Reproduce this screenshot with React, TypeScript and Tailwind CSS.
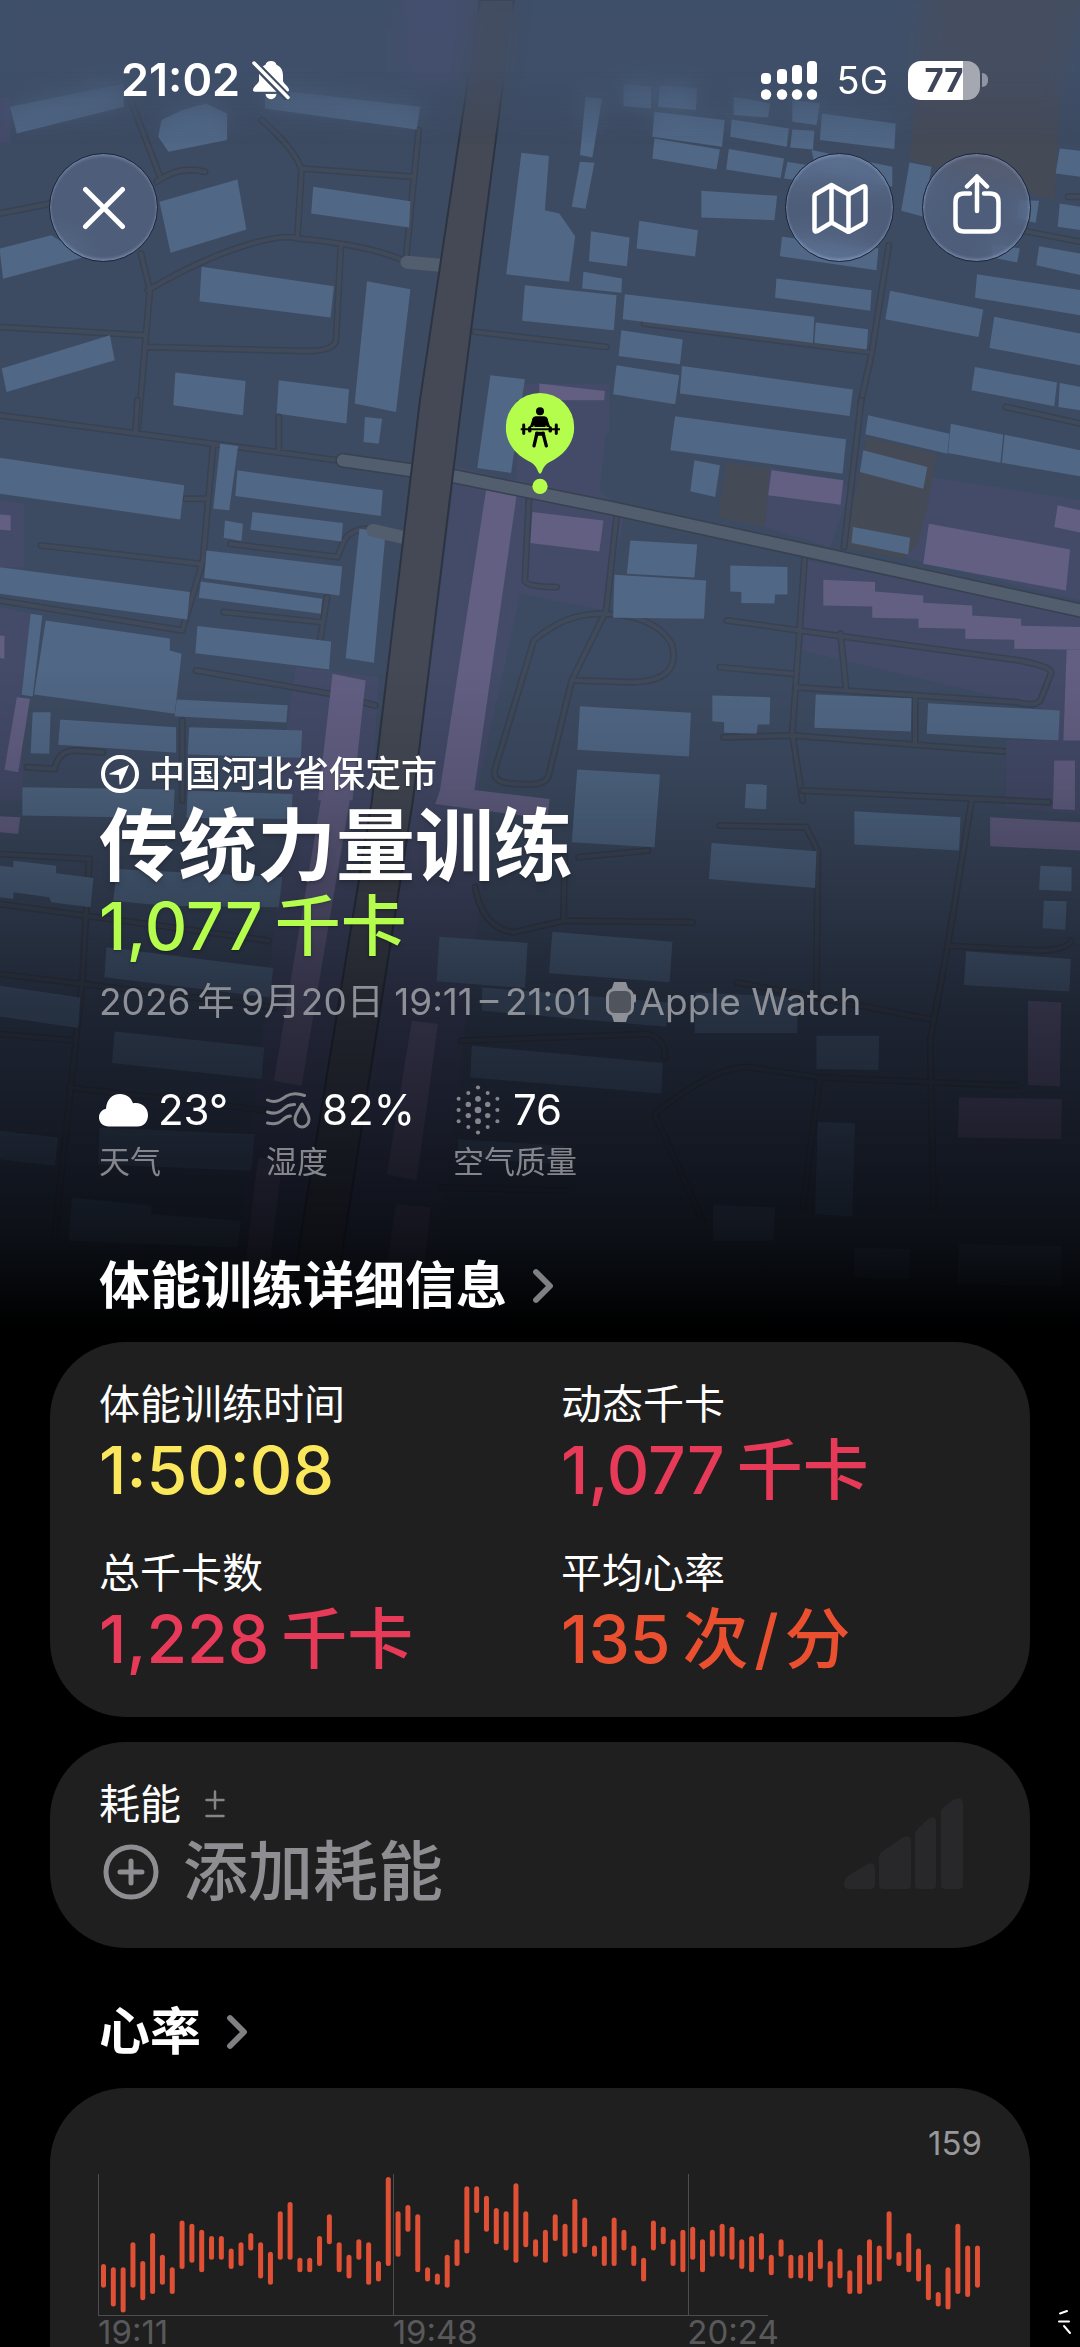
import type { ReactNode } from 'react';
import { ChevronRight } from 'lucide-react';

interface MapTileProps {
  y: number;
  land?: string[];
  paved?: string[];
  homes: string[];
  shops: string[];
  lanes: string;
}

interface MetricProps {
  label: string;
  value: string;
  unit?: string;
  className: string;
}

const SMALL = 'fill-none stroke-[#374254] stroke-[7px]';
const SMALL_INNER = 'fill-none stroke-[#404a5a] stroke-[4px]';

const TILES: MapTileProps[] = [
  {
    y: 0,
    land: ['585,0 690,0 670,240 585,240', '0,290 15,290 15,430 0,430', '750,1150 885,1150 885,1300 750,1300'],
    paved: ['1340,0 1568,0 1540,250 1530,600 1320,480'],
    homes: [
      '15,320 180,250 180,320 25,400', '235,360 265,330 300,310 330,340 330,420 245,455 230,410',
      '385,280 400,270 610,320 605,388 385,325', '232,605 345,538 358,688 248,758',
      '455,560 596,603 594,682 452,640', '0,745 75,705 125,770 5,836', '293,800 485,858 480,952 290,903',
      '533,843 596,867 575,1235 515,1210', '3,1105 160,1005 167,1080 10,1175',
      '255,1117 357,1142 353,1245 252,1215', '405,1140 507,1167 503,1270 402,1240',
      '757,458 797,468 791,630 812,640 835,708 826,845 735,822', '850,290 874,296 860,472 842,465',
      '842,485 863,488 850,626 830,620', '905,250 945,260 945,325 905,318', '958,255 1012,265 1010,330 955,320',
      '950,335 1052,360 1048,440 947,410', '950,415 1045,448 1040,508 947,475',
      '1065,290 1118,310 1115,352 1065,345', '1062,358 1145,385 1142,440 1060,410',
      '1150,388 1182,392 1180,448 1147,442', '1150,300 1190,310 1185,375 1150,365',
      '1193,340 1300,370 1298,447 1190,420', '1058,447 1138,475 1133,534 1054,508',
      '1143,485 1185,500 1175,545 1138,535', '1178,450 1295,500 1295,560 1185,520',
      '1018,572 1128,587 1124,660 1018,652', '1320,487 1352,500 1340,650 1308,632',
      '1538,445 1568,452 1568,530 1532,520', '1538,610 1568,620 1568,690 1535,680',
      '1480,600 1508,602 1503,668 1475,655', '928,662 1013,690 1009,769 924,745',
      '858,693 914,712 910,798 855,783', '847,815 903,835 902,878 845,865', '762,855 895,885 891,990 758,962',
      '907,882 1182,950 1180,1028 904,957', '1184,967 1260,987 1258,1048 1182,1028',
      '1135,710 1275,745 1272,810 1132,768', '1127,835 1265,870 1263,932 1125,893',
      '1292,872 1427,928 1420,1010 1285,957', '1440,730 1480,745 1476,787 1440,772',
      '1508,738 1568,760 1568,825 1504,795', '1418,822 1568,870 1568,945 1415,893',
      '1443,950 1568,1000 1568,1095 1436,1043', '902,990 991,1018 987,1092 898,1067',
      '895,1095 986,1125 980,1212 890,1182', '990,1097 1238,1168 1233,1247 987,1180',
      '1415,1100 1534,1147 1530,1218 1410,1170', '1538,1148 1568,1160 1568,1230 1536,1220',
      '712,1125 762,1137 742,1418 693,1403',
    ],
    shops: ['783,1150 878,1172 875,1262 783,1230'],
    lanes:
      'M190 300L232 525M228 545Q260 495 298 515M380 360Q430 450 438 510L432 712M438 505L600 530M608 390L590 765M0 640L75 610M215 870Q290 780 350 740T432 715Q540 735 590 785M205 760L218 870L200 1300M495 740L488 1020Q485 1055 440 1052L215 1040M0 980L210 1005M690 995L880 1040M935 970L1260 1055M1290 735L1265 1060L1250 1200M1480 690L1568 725M1550 590H1568',
  },
  {
    y: 400,
    land: [
      '750,0 885,0 870,270 905,330 905,350 880,630 755,580 690,1200 600,1200 662,200 750,240',
      '1115,200 1235,260 1205,440 1110,380', '1350,230 1568,300 1568,600 1310,470',
      '1170,480 1568,640 1568,1200 1460,1200 1480,1060 1540,940 1500,915 1165,750',
      '0,300 35,310 35,500 0,500', '0,620 45,640 30,900 35,1200 0,1200', '430,800 550,830 540,1200 400,1200',
    ],
    paved: ['1055,185 1118,205 1110,380 1042,350', '1258,110 1360,160 1345,330 1330,440 1310,475 1225,440'],
    homes: [
      '0,172 268,255 262,357 0,280', '320,130 346,137 333,330 310,325', '345,210 556,270 553,347 342,287',
      '530,50 555,55 550,130 528,125', '367,335 498,368 496,423 364,388', '327,360 353,370 351,422 325,412',
      '300,450 497,498 493,585 297,533', '292,543 468,595 466,640 289,592', '0,500 276,575 272,657 0,580',
      '522,385 560,395 543,787 502,773', '287,677 481,723 478,807 284,758', '45,640 62,645 48,888 32,883',
      '67,660 247,714 247,750 264,760 254,940 50,882', '257,897 418,914 416,966 254,947',
      '48,935 74,935 72,1060 45,1058', '88,957 256,980 256,1057 85,1033', '275,980 439,990 437,1072 273,1062',
      '980,48 1228,117 1223,220 973,150', '1008,180 1045,195 1038,290 1002,273',
      '1260,45 1378,100 1375,160 1256,102', '1380,70 1456,103 1452,187 1376,158',
      '1458,103 1568,150 1568,228 1454,187', '1253,150 1346,200 1340,265 1248,215',
      '1238,380 1321,412 1318,462 1236,428', '915,420 1012,432 1008,531 910,520',
      '892,523 1025,540 1022,655 890,652',
      '1060,495 1143,500 1143,582 1125,582 1124,609 1076,608 1076,575 1060,573',
      '1034,885 1118,890 1117,972 1100,972 1098,1000 1051,997 1051,965 1034,962',
      '842,917 1003,937 1000,1068 838,1048', '1184,882 1323,893 1322,993 1182,982',
      '1347,908 1538,930 1536,1020 1345,1000',
    ],
    shops: [
      '1120,210 1224,240 1220,313 1115,285', '1348,370 1553,447 1547,570 1340,490',
      '1535,315 1568,330 1568,397 1530,380', '706,265 750,285 688,1180 638,1180', '773,335 876,360 870,453 770,428',
      '1195,538 1270,545 1270,573 1340,585 1340,607 1411,615 1411,645 1482,655 1482,676 1568,680 1568,748 1472,745 1472,718 1401,715 1401,685 1333,682 1333,655 1266,652 1266,618 1195,615',
      '0,342 16,345 16,390 0,388', '0,705 7,707 7,775 0,772', '483,820 531,840 512,1200 462,1200',
      '25,890 44,895 27,1115 7,1108', '1548,748 1568,748 1568,1040 1543,1035',
    ],
    lanes:
      'M0 45L310 130L490 180M200 0L197 100M405 50V150M310 130L295 480L265 690M270 295H300M60 435L290 490M0 600L265 690M335 430L490 470L500 420Q510 385 535 385M325 635L465 665M475 590L465 720M285 810L480 880L545 915M768 290L762 540Q765 560 808 560M895 350L880 630L830 840L797 1120Q795 1160 750 1150Q715 1150 718 1110L775 720Q820 640 870 640Q950 640 975 730Q990 840 920 845L835 840M1168 470L1150 1000L1165 1200M1055 660L1160 690L1480 780Q1530 800 1525 820L1510 900Q1500 920 1475 905L1155 860M1220 700L1228 865M1045 800L1150 820M1050 1010L1150 1005L1568 1070M1328 895V1030M1250 0L1225 440M1460 20L1568 70M40 1100L80 1105Q85 1050 110 1050L150 1055M265 960V1200',
  },
  {
    y: 740,
    land: ['420,180 540,180 420,1800 330,1800', '600,180 715,180 620,1800 480,1800', '1460,0 1568,0 1568,220 1460,200'],
    homes: [
      '33,140 254,147 252,233 33,225', '273,150 425,160 423,235 271,232',
      '0,375 20,380 20,360 82,375 82,398 136,412 132,500 75,485 72,470 20,455 20,475 0,470',
      '170,385 410,410 405,500 240,495 165,480', '155,620 397,682 392,770 152,710', '0,735 117,770 114,862 0,827',
      '167,872 384,920 380,1015 163,967', '638,588 766,607 762,742 634,722', '802,573 976,603 972,725 797,698',
      '700,740 970,785 967,858 700,810', '685,915 962,967 960,1058 683,1010', '1010,755 1158,770 1157,877 1008,877',
      '1185,885 1276,885 1275,988 1185,985', '1240,212 1394,230 1392,330 1240,312',
      '1033,307 1185,332 1183,442 1029,415', '1510,375 1555,380 1555,452 1508,447',
      '1515,480 1548,482 1546,567 1513,563', '1402,632 1554,655 1552,752 1399,733',
      '1187,1143 1241,1147 1237,1427 1183,1420', '145,1160 370,1180 365,1290 143,1270',
      '0,1170 85,1190 80,1275 0,1255', '105,1370 220,1395 220,1420 350,1440 345,1520 100,1500',
      '665,1195 820,1215 815,1270 665,1250', '1035,1393 1125,1400 1122,1500 1035,1500',
      '838,87 958,102 950,320 830,305', '1083,130 1113,132 1112,206 1081,202',
      '1240,1520 1320,1525 1320,1615 1240,1610', '1392,1510 1540,1515 1540,1635 1390,1630',
    ],
    shops: [
      '470,130 512,130 438,1035 398,1020', '642,130 690,130 688,148 798,175 795,235 632,190',
      '598,840 636,850 605,1320 562,1300', '375,1250 410,1260 390,1600 355,1600',
      '575,1390 625,1400 615,1600 560,1600', '0,227 30,230 27,280 0,275', '1437,230 1568,245 1568,330 1437,317',
      '1530,60 1560,60 1560,208 1528,205', '1492,780 1540,785 1538,1037 1492,1033',
      '1392,1070 1541,1075 1540,1195 1390,1190',
    ],
    lanes:
      'M0 340L130 355L120 720L80 1480M0 490L390 600M0 700L400 800M0 880L110 900M100 1040L390 1110M1165 150L1522 185M1410 180L1375 620L1350 900L1355 1400M1045 255L1170 260L1187 330L1185 760M1375 615L1510 630Q1550 625 1555 600M690 440Q700 560 745 575L820 540L1005 545M820 340L818 540M840 350L940 330M670 900L940 880Q965 890 965 950M1070 725L1350 835M950 1120Q1040 970 1090 980L1190 1010L1475 1035M950 1120L1020 1440M1190 1010L1165 1400M640 1340L820 1350',
  },
];

// [high, low] beats per minute, one entry per bar
const HEART_RATE: [number, number][] = [
  [129, 123], [128, 117], [128, 115], [136, 123], [130, 119], [139, 121], [132, 124], [128, 121], [143, 129],
  [142, 131], [140, 128], [138, 132], [138, 132], [134, 129], [136, 130], [139, 135], [136, 126], [133, 124],
  [146, 132], [149, 132], [131, 128], [131, 128], [138, 130], [145, 137], [136, 128], [132, 126], [137, 132],
  [136, 124], [130, 125], [157, 130], [146, 133], [148, 141], [145, 128], [128, 125], [126, 124], [132, 123],
  [137, 130], [154, 134], [154, 147], [151, 141], [147, 137], [146, 135], [155, 131], [146, 136], [137, 133],
  [140, 131], [145, 138], [142, 133], [150, 134], [144, 136], [135, 133], [138, 130], [144, 130], [140, 135],
  [135, 130], [131, 125], [143, 135], [141, 137], [137, 130], [140, 128], [141, 132], [137, 128], [140, 133],
  [142, 133], [141, 132], [137, 129], [138, 128], [139, 132], [132, 127], [137, 133], [132, 126], [132, 126],
  [133, 125], [137, 129], [130, 123], [134, 126], [127, 121], [132, 121], [137, 124], [135, 125], [146, 132],
  [133, 130], [139, 128], [134, 125], [129, 119], [120, 117], [128, 116], [142, 121], [135, 120], [135, 123],
];

const AIR_DOTS: [number, number, number][] = [
  [0, 0, 3.3], [0, -11.2, 2.9], [0, 11.2, 2.9], [0, -22.5, 2.1], [0, 22.5, 2.1],
  [-9.7, -5.6, 2.7], [-9.7, 5.6, 2.7], [9.7, -5.6, 2.7], [9.7, 5.6, 2.7],
  [-9.7, -17, 2], [-9.7, 17, 2], [9.7, -17, 2], [9.7, 17, 2],
  [-19.4, -11.2, 2], [-19.4, 0, 2.1], [-19.4, 11.2, 2], [19.4, -11.2, 2], [19.4, 0, 2.1], [19.4, 11.2, 2],
];

const bpmToY = (bpm: number) => 5.5 + (157 - bpm) * 3.11;

const MapTile = ({ y, land = [], paved = [], homes, shops, lanes }: MapTileProps) => (
  <g transform={`translate(0 ${y}) scale(0.6888 0.3333)`}>
    {land.map((p) => <polygon key={p} points={p} className="fill-[#444b69]" />)}
    {paved.map((p) => <polygon key={p} points={p} className="fill-[#454a57]" />)}
    <path d={lanes} vectorEffect="non-scaling-stroke" strokeLinecap="round" className={SMALL} />
    <path d={lanes} vectorEffect="non-scaling-stroke" strokeLinecap="round" className={SMALL_INNER} />
    {homes.map((p) => <polygon key={p} points={p} className="fill-[#506785]" />)}
    {shops.map((p) => <polygon key={p} points={p} className="fill-[#625f83]" />)}
  </g>
);

const RouteMap = () => (
  <div className="absolute inset-0 -z-10 overflow-hidden bg-[#3d4b62]">
    <svg viewBox="0 0 1080 1341" preserveAspectRatio="xMidYMin slice" className="size-full" aria-hidden="true">
      {TILES.map((tile) => <MapTile key={tile.y} {...tile} />)}
      <path d="M407 262L440 265M373 530L403 537" strokeLinecap="round" className="fill-none stroke-[#525d6d] stroke-[13px]" />
      <path d="M343 460L412 470L455 476L608 507L1080 610" strokeLinejoin="round" strokeLinecap="round" className="fill-none stroke-[#37414f] stroke-[15px]" />
      <path d="M343 460L412 470L455 476L608 507L1080 610" strokeLinejoin="round" strokeLinecap="round" className="fill-none stroke-[#525d6d] stroke-[12px]" />
      <path d="M480 0H514L462 400L413 800L344 1240L330 1341H288L300 1240L372 800L420 400Z" className="fill-[#444955] stroke-[#2c3442] stroke-2" />
    </svg>
    <div className="absolute inset-x-0 top-0 h-36 bg-[#46597a]/30 backdrop-blur-md [mask-image:linear-gradient(black_50%,transparent)]" />
    <div className="absolute inset-0 bg-[linear-gradient(to_bottom,transparent_50%,rgb(0_0_0/0.1)_58%,rgb(3_4_8/0.32)_67%,rgb(5_6_12/0.55)_75%,rgb(5_6_12/0.7)_84%,rgb(4_5_9/0.84)_92%,black_99%)]" />
  </div>
);

const StatusBar = () => (
  <div className="flex h-15 items-center justify-between pr-23 pl-[121px]">
    <div className="flex items-center gap-3">
      <time className="text-[45px] leading-15 font-semibold">21:02</time>
      <svg viewBox="0 0 38 40" className="h-10 w-9.5 fill-white" aria-label="静音">
        <path d="M19 1c-3 0-5 1.500-5.500 3.800C8.500 7 7 11 7 16v4.500c0 3-6 6-6 9.500 0 1 .8 1.700 2 1.700h32c1.200 0 2-.7 2-1.700 0-3.500-6-6.500-6-9.500V16c0-5-1.500-9-6.500-11.200C24 2.500 22 1 19 1zM13.500 34h11c-.5 3.400-2.700 5.200-5.500 5.200s-5-1.800-5.500-5.200z" />
        <path d="M0 1L38 40" className="fill-none stroke-[#3f4e66] stroke-[8px]" />
        <path d="M2 3L36 37.500" strokeLinecap="round" className="fill-none stroke-white stroke-[3.500px]" />
      </svg>
    </div>
    <div className="flex items-center gap-5">
      <svg viewBox="0 0 56 40" className="h-10 w-14 fill-white" aria-label="信号">
        <rect x="0" y="13" width="10" height="11" rx="4" />
        <rect x="16" y="9" width="10" height="15" rx="4" />
        <rect x="31" y="5" width="10" height="19" rx="4" />
        <rect x="46" y="1" width="10" height="23" rx="4" />
        <circle cx="5" cy="34.500" r="5.200" />
        <circle cx="21" cy="34.500" r="5.200" />
        <circle cx="36" cy="34.500" r="5.200" />
        <circle cx="51" cy="34.500" r="5.200" />
      </svg>
      <span className="text-[38px] leading-15">5G</span>
      <div className="flex items-center gap-0.5">
        <div className="flex h-[39px] w-18 items-center justify-center rounded-[13px] bg-[linear-gradient(to_right,white_77%,#a5a8b0_77%)] text-[33px] leading-10 font-bold text-[#3f4659]">
          77
        </div>
        <span className="h-3.5 w-1.5 rounded-r-full bg-[#8f95a3]" />
      </div>
    </div>
  </div>
);

const GlassButton = ({ label, children }: { label: string; children: ReactNode }) => (
  <button
    type="button"
    aria-label={label}
    className="flex size-[109px] items-center justify-center rounded-full border border-[#1d2738] bg-[#8496c4]/25 shadow-[inset_0_2px_3px_rgb(190_205_245/0.3),inset_0_-2px_3px_rgb(190_205_245/0.35)] backdrop-blur-md"
  >
    {children}
  </button>
);

const WorkoutPin = () => (
  <svg viewBox="79 69 206 304" className="absolute top-[393px] left-1/2 h-[101px] w-[69px] -translate-x-1/2" aria-hidden="true">
    <path d="M182 69a103 103 0 0 1 103 103c0 40-22 75-60 97-18 10-30 14-38 38q-5 10-10 0c-8-24-20-28-38-38-38-22-60-57-60-97A103 103 0 0 1 182 69z" className="fill-[#b5fd4d]" />
    <circle cx="182" cy="350" r="23" className="fill-[#b5fd4d]" />
    <circle cx="182" cy="124" r="12" />
    <path d="M170 139h24q9 0 11 9l-7 24h-32l-7-24q2-9 11-9z" />
    <path d="M165 147L153 181M199 147L211 181M173 190L164 228M191 190L201 228" strokeLinecap="round" className="fill-none stroke-black stroke-[10px]" />
    <path d="M169 186h26l3 12h-32z" />
    <path d="M150 178H214" className="stroke-[#b5fd4d] stroke-[13px]" />
    <path d="M124 178H242" className="stroke-black stroke-[6px]" />
    <path d="M133 165V191M231 165V191" strokeLinecap="round" className="stroke-black stroke-[9px]" />
    <path d="M151 174V183M213 174V183" strokeLinecap="round" className="stroke-black stroke-[10px]" />
  </svg>
);

const Condition = ({ icon, value, label }: { icon: ReactNode; value: string; label: string }) => (
  <div>
    <dd className="flex h-12 items-center gap-2.5 text-[42px] leading-12">
      {icon}
      {value}
    </dd>
    <dt className="mt-1.5 text-[31px] leading-11 text-[#85868c]">{label}</dt>
  </div>
);

const SectionLink = ({ children }: { children: ReactNode }) => (
  <h2 className="px-[99px] text-[51px] leading-16 font-bold">
    <a href="#" className="inline-flex items-center gap-2">
      {children}
      <ChevronRight className="size-14 text-[#808083]" strokeWidth={2.5} />
    </a>
  </h2>
);

const Metric = ({ label, value, unit, className }: MetricProps) => (
  <div>
    <dt className="text-[41px] leading-12">{label}</dt>
    <dd className={`mt-1.5 flex gap-3 text-[66px] leading-18 font-medium ${className}`}>
      <span>{value}</span>
      {unit && <span>{unit}</span>}
    </dd>
  </div>
);

const HeartRateChart = () => (
  <svg viewBox="0 0 884 142" className="mt-[11px] block w-full" aria-label="心率图表">
    <path d="M0.500 0V142M295.500 0V142M590.500 0V142M0 141.500H670" className="fill-none stroke-[#4c4c4e] stroke-1" />
    {HEART_RATE.map(([high, low], i) => (
      <path
        key={i}
        d={`M${5.5 + i * 9.82} ${bpmToY(high)}V${bpmToY(low)}`}
        strokeLinecap="round"
        className="stroke-[#df5034] stroke-[5px]"
      />
    ))}
  </svg>
);

export default function App() {
  return (
    <main className="relative flex min-h-screen flex-col overflow-hidden bg-black font-['Inter','Noto_Sans_CJK_SC',sans-serif] text-white">
      <section className="relative isolate pt-[50px] pb-6">
        <RouteMap />
        <StatusBar />

        <nav className="mt-[43px] flex justify-between px-[49px]">
          <GlassButton label="关闭">
            <svg viewBox="0 0 44 44" className="size-11" aria-hidden="true">
              <path d="M3.500 3.500L40.500 40.500M40.500 3.500L3.500 40.500" strokeLinecap="round" className="stroke-white stroke-[5px]" />
            </svg>
          </GlassButton>
          <div className="flex gap-7">
            <GlassButton label="地图">
              <svg viewBox="0 0 56 52" className="h-13 w-14" aria-hidden="true">
                <path d="M3 12.500L19.500 3 36.500 12.500 51 4.500Q53.500 3.500 53.500 6.500V38.500Q53.500 40.500 52 41.500L36.500 50 19.500 40.500 5.500 49Q2.500 50.500 2.500 47.500V14.500Q2.500 13 3 12.500zM19.500 3V40.500M36.500 12.500V50" strokeLinejoin="round" className="fill-none stroke-white stroke-[4.500px]" />
              </svg>
            </GlassButton>
            <GlassButton label="共享">
              <svg viewBox="0 0 48 60" className="mb-2 h-15 w-12" aria-hidden="true">
                <path d="M17 19.500H11Q2.500 19.500 2.500 28V49Q2.500 57.500 11 57.500H37Q45.500 57.500 45.500 49V28Q45.500 19.500 37 19.500H31M24 37V2.500M14 12.500L24 2.500 34 12.500" strokeLinecap="round" strokeLinejoin="round" className="fill-none stroke-white stroke-[4.500px]" />
              </svg>
            </GlassButton>
          </div>
        </nav>
        <WorkoutPin />

        <header className="mt-[488px] px-[99px]">
          <p className="flex items-center gap-2.5 text-[36px] leading-12 font-medium text-shadow-md">
            <svg viewBox="0 0 40 40" className="size-10" aria-hidden="true">
              <circle cx="21" cy="20" r="17" className="fill-none stroke-white stroke-[4px]" />
              <path d="M30 11L10.500 19.500Q10 20.500 11 20.500L20 21 20.500 30Q20.500 31 21.500 30.500z" className="fill-white" />
            </svg>
            中国河北省保定市
          </p>
          <h1 className="text-[79px] leading-24 font-bold text-shadow-lg">传统力量训练</h1>
          <p className="flex gap-3 text-[66px] leading-16 font-medium text-[#b5fd4d] text-shadow-md">
            <span>1,077</span>
            <span>千卡</span>
          </p>
          <p className="mt-5 flex items-center gap-3.5 text-[37px] leading-12 text-[#8e9097]">
            <span>2026{'\u2009'}年{'\u2009'}9月20日 19:11{'\u2009'}–{'\u2009'}21:01</span>
            <span className="flex items-center gap-1">
              <svg viewBox="0 0 30 40" className="h-10 w-7.5" aria-hidden="true">
                <path d="M8 0h12l3 9v22l-3 9H8l-3-9V9z" className="fill-[#8e9097]" />
                <rect x="1.500" y="7.500" width="25" height="25" rx="7" className="fill-[#50545d] stroke-[#8e9097] stroke-[3px]" />
                <path d="M28.500 13.500V19" strokeLinecap="round" className="stroke-[#8e9097] stroke-[3px]" />
              </svg>
              Apple Watch
            </span>
          </p>

          <dl className="mt-[60px] flex gap-[38px]">
            <Condition
              label="天气"
              value="23°"
              icon={
                <svg viewBox="0 0 49 33" className="h-[33px] w-[49px] fill-white" aria-hidden="true">
                  <path d="M10 32.500C4 32.500 0 28.500 0 23.500 0 19 3 15.500 7 14.800 7.500 6 13 0 21 0 27.500 0 32 3.500 34 9.200 42 7.500 49 13 49 21 49 28 44.500 32.500 38.500 32.500z" />
                </svg>
              }
            />
            <Condition
              label="湿度"
              value="82%"
              icon={
                <svg viewBox="0 0 46 37" className="h-[37px] w-[46px] fill-none stroke-[#85868c] stroke-3" aria-hidden="true">
                  <path d="M1.500 8c9 4 14-1 19-4s11-3 18-.5M1.500 20c8 3 13 0 17-4s7-3 10-3.500M1.500 31c8 2 12 0 15-3s5-4 8-4M36 12c-3 6-7 10-7 15.500a7 7.500 0 0 0 14 0c0-5.500-4-9.500-7-15.500z" strokeLinecap="round" strokeLinejoin="round" />
                </svg>
              }
            />
            <Condition
              label="空气质量"
              value="76"
              icon={
                <svg viewBox="-25 -26 50 52" className="h-13 w-12.5 shrink-0 fill-[#85868c]" aria-hidden="true">
                  {AIR_DOTS.map(([x, y, r]) => <circle key={`${x},${y}`} cx={x} cy={y} r={r} />)}
                </svg>
              }
            />
          </dl>
        </header>

        <div className="mt-[70px]">
          <SectionLink>体能训练详细信息</SectionLink>
        </div>
      </section>

      <dl className="mx-[50px] grid grid-cols-[462fr_420fr] gap-y-[43px] rounded-[76px] bg-[#1f1f1f] px-[49px] pt-[38px] pb-[42px]">
        <Metric label="体能训练时间" value="1:50:08" className="text-[#fbe75b]" />
        <Metric label="动态千卡" value="1,077" unit="千卡" className="text-[#e63a58]" />
        <Metric label="总千卡数" value="1,228" unit="千卡" className="text-[#e63a58]" />
        <Metric label="平均心率" value="135" unit={'次\u200A/\u200A分'} className="text-[#ea5030]" />
      </dl>

      <section className="mx-[50px] mt-[25px] flex items-center justify-between rounded-[76px] bg-[#1f1f1f] pt-[38px] pr-[67px] pb-10 pl-[49px]">
        <div>
          <h3 className="flex items-center gap-6 text-[41px] leading-12">
            耗能
            <svg viewBox="0 0 20 28" className="h-7 w-5" aria-hidden="true">
              <path d="M10 1.500V18.500M1.500 10H18.500M1.500 26H18.500" strokeLinecap="round" className="stroke-[#858587] stroke-[2.500px]" />
            </svg>
          </h3>
          <button type="button" className="mt-2 flex items-center gap-6 pl-1 text-[65px] leading-18 font-medium text-[#8e8e92]">
            <svg viewBox="0 0 56 56" className="size-14" aria-hidden="true">
              <path d="M28 17V39M17 28H39M28 3A25 25 0 1 1 28 53 25 25 0 1 1 28 3z" strokeLinecap="round" className="fill-none stroke-[#8e8e92] stroke-[5px]" />
            </svg>
            添加耗能
          </button>
        </div>
        <svg viewBox="0 0 119 92" className="h-23 w-[119px] fill-[#28282a]" aria-hidden="true">
          <path d="M0 86Q0 81 4 78L22 67Q31 62 31 72V87Q31 91 27 91H5Q0 91 0 86z" />
          <path d="M35 60Q35 56 39 53L58 40Q67 35 67 45V87Q67 91 63 91H39Q35 91 35 87z" />
          <path d="M71 37Q71 33 75 30L83 22Q92 15 92 25V87Q92 91 88 91H75Q71 91 71 87z" />
          <path d="M97 14Q97 11 101 8L109 2Q119-3 119 7V87Q119 91 115 91H101Q97 91 97 87z" />
        </svg>
      </section>

      <div className="mt-[52px]">
        <SectionLink>心率</SectionLink>
      </div>

      <section className="mx-[50px] mt-6 flex-1 rounded-t-[76px] bg-[#1f1f1f] px-12 pt-[35px] text-[33px] leading-10">
        <p className="text-right text-[#98989a]">159</p>
        <HeartRateChart />
        <div className="mt-0.5 grid grid-cols-3 leading-7 text-[#59595b]">
          <span>19:11</span>
          <span>19:48</span>
          <span>20:24</span>
        </div>
      </section>

      <svg viewBox="0 0 14 26" className="absolute right-2 bottom-3 h-6.5 w-3.5" aria-hidden="true">
        <path d="M2 4.500L9 2M1 12.500H11M6 17L12 24" strokeLinecap="round" className="fill-none stroke-white stroke-2" />
      </svg>
    </main>
  );
}
